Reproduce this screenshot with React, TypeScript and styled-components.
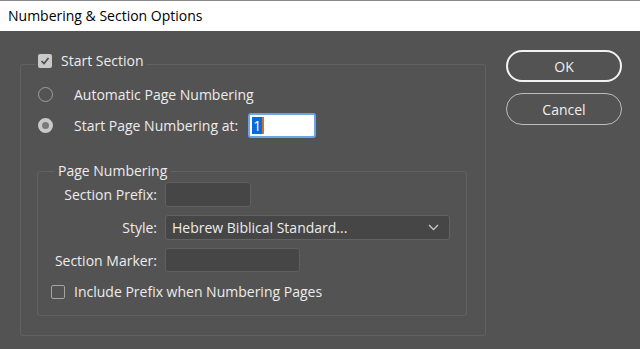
import styled, { createGlobalStyle } from "styled-components"

const GlobalStyle = createGlobalStyle`
    html, body {
        margin: 0;
        padding: 0;
        background: #535353;
    }
    body {
        font-family: "Open Sans", "Noto Sans", sans-serif;
    }
`

const App = () => {
    return (
        <Dialog>
            <GlobalStyle />
            <TitleBar>Numbering &amp; Section Options</TitleBar>
            <Body>
                <OuterGroup>
                    <OuterLegend>
                        <CheckBox checked />
                        <span>Start Section</span>
                    </OuterLegend>
                    <RadioRow>
                        <Radio />
                        <RadioLabel>Automatic Page Numbering</RadioLabel>
                    </RadioRow>
                    <RadioRow>
                        <Radio checked />
                        <RadioLabel>Start Page Numbering at:</RadioLabel>
                        <NumberField>
                            <Selected>1</Selected>
                            <Caret />
                        </NumberField>
                    </RadioRow>
                    <InnerGroup>
                        <InnerLegend>Page Numbering</InnerLegend>
                        <FormGrid>
                            <FieldLabel>Section Prefix:</FieldLabel>
                            <TextField width={86} />
                            <FieldLabel>Style:</FieldLabel>
                            <SelectBox>
                                <span>Hebrew Biblical Standard...</span>
                                <svg width="11" height="7" viewBox="0 0 11 7">
                                    <polyline points="1,1 5.5,5.5 10,1" fill="none" stroke="#c4c4c4" strokeWidth="1.4" />
                                </svg>
                            </SelectBox>
                            <FieldLabel>Section Marker:</FieldLabel>
                            <TextField width={135} short />
                        </FormGrid>
                        <CheckRow>
                            <CheckBox />
                            <span>Include Prefix when Numbering Pages</span>
                        </CheckRow>
                    </InnerGroup>
                </OuterGroup>
                <ButtonColumn>
                    <DialogButton primary>OK</DialogButton>
                    <DialogButton>Cancel</DialogButton>
                </ButtonColumn>
            </Body>
        </Dialog>
    )
}

export default App

const CheckBox = ({ checked }: { checked?: boolean }) => (
    <Box checked={checked}>
        {checked && (
            <svg width="10" height="10" viewBox="0 0 10 10">
                <polyline points="1.5,5 4,7.5 8.5,2" fill="none" stroke="#4a4a4a" strokeWidth="1.6" />
            </svg>
        )}
    </Box>
)

const Dialog = styled.div`
    width: 640px;
    height: 349px;
    background: #535353;
    color: #ececec;
    font-size: 13px;
    overflow: hidden;
`

const TitleBar = styled.div`
    height: 30px;
    border-top: 1px solid #8a8a8a;
    background: #ffffff;
    color: #000;
    font-size: 14px;
    line-height: 30px;
    padding-left: 8px;
`

const Body = styled.div`
    display: flex;
    align-items: flex-start;
    padding: 0 18px 0 20px;
`

const OuterGroup = styled.fieldset`
    margin: 21px 0 0 0;
    padding: 0 0 14px 0;
    width: 466px;
    height: 284px;
    box-sizing: border-box;
    border: 1px solid #626262;
    border-radius: 3px;
`

const OuterLegend = styled.legend`
    display: flex;
    align-items: flex-start;
    gap: 9px;
    margin-left: 15px;
    padding: 0 3px 6px 2px;
    height: 24px;
    box-sizing: border-box;
    font-size: 14px;
    line-height: 18px;

    > span:first-child {
        margin-top: 2px;
    }
`

const Box = styled.span<{ checked?: boolean }>`
    display: inline-flex;
    align-items: center;
    justify-content: center;
    flex-shrink: 0;
    width: 14px;
    height: 14px;
    box-sizing: border-box;
    border-radius: 2px;
    background: ${p => (p.checked ? "#c9c9c9" : "transparent")};
    border: ${p => (p.checked ? "none" : "1.5px solid #a4a4a4")};
`

const RadioRow = styled.div`
    display: flex;
    align-items: center;
    height: 25px;
    margin-left: 17px;
    margin-top: 6px;
    & + & {
        margin-top: 6px;
    }
`

const Radio = styled.span<{ checked?: boolean }>`
    width: 15px;
    height: 15px;
    box-sizing: border-box;
    border-radius: 50%;
    border: ${p => (p.checked ? "4px solid #c9c9c9" : "1.5px solid #a0a0a0")};
    background: ${p => (p.checked ? "#7a7a7a" : "transparent")};
`

const RadioLabel = styled.span`
    margin-left: 21px;
    margin-right: 10px;
    font-size: 14px;
`

const NumberField = styled.div`
    display: flex;
    align-items: center;
    width: 68px;
    height: 25px;
    box-sizing: border-box;
    background: #fff;
    border: 2px solid #6aa5e6;
    border-radius: 3px;
    padding-left: 2px;
`

const Selected = styled.span`
    background: #0a6ad6;
    color: #fff;
    font-size: 14px;
    line-height: 17px;
    padding: 0 1px;
`

const Caret = styled.span`
    width: 2px;
    height: 17px;
    background: #c8742a;
`

const InnerGroup = styled.fieldset`
    margin: 24px 18px 0 16px;
    padding: 0;
    height: 154px;
    box-sizing: border-box;
    border: 1px solid #626262;
    border-radius: 3px;
`

const InnerLegend = styled.legend`
    margin-left: 16px;
    padding: 0 4px;
    font-size: 14px;
    line-height: 18px;
`

const FormGrid = styled.div`
    display: grid;
    grid-template-columns: 119px auto;
    column-gap: 8px;
    row-gap: 8px;
    align-items: center;
    justify-items: start;
    margin-top: 2px;
`

const FieldLabel = styled.span`
    justify-self: end;
    font-size: 14px;
`

const TextField = styled.div<{ width: number; short?: boolean }>`
    width: ${p => p.width}px;
    height: ${p => (p.short ? 24 : 25)}px;
    box-sizing: border-box;
    background: #464646;
    border: 1px solid #5f5f5f;
    border-radius: 3px;
`

const SelectBox = styled.div`
    display: flex;
    align-items: center;
    justify-content: space-between;
    width: 285px;
    height: 25px;
    box-sizing: border-box;
    padding: 0 10px 0 6px;
    background: #464646;
    border: 1px solid #626262;
    border-radius: 3px;
    font-size: 14px;
`

const CheckRow = styled.div`
    display: flex;
    align-items: center;
    gap: 9px;
    margin: 10px 0 0 13px;
    font-size: 14px;
`

const ButtonColumn = styled.div`
    display: flex;
    flex-direction: column;
    gap: 11px;
    margin: 19px 0 0 20px;
`

const DialogButton = styled.button<{ primary?: boolean }>`
    width: 116px;
    height: 32px;
    box-sizing: border-box;
    border-radius: 16px;
    background: transparent;
    color: #f0f0f0;
    font-family: inherit;
    font-size: 14px;
    border: ${p => (p.primary ? "2px solid #f2f2f2" : "1px solid #bdbdbd")};
    cursor: pointer;
`
